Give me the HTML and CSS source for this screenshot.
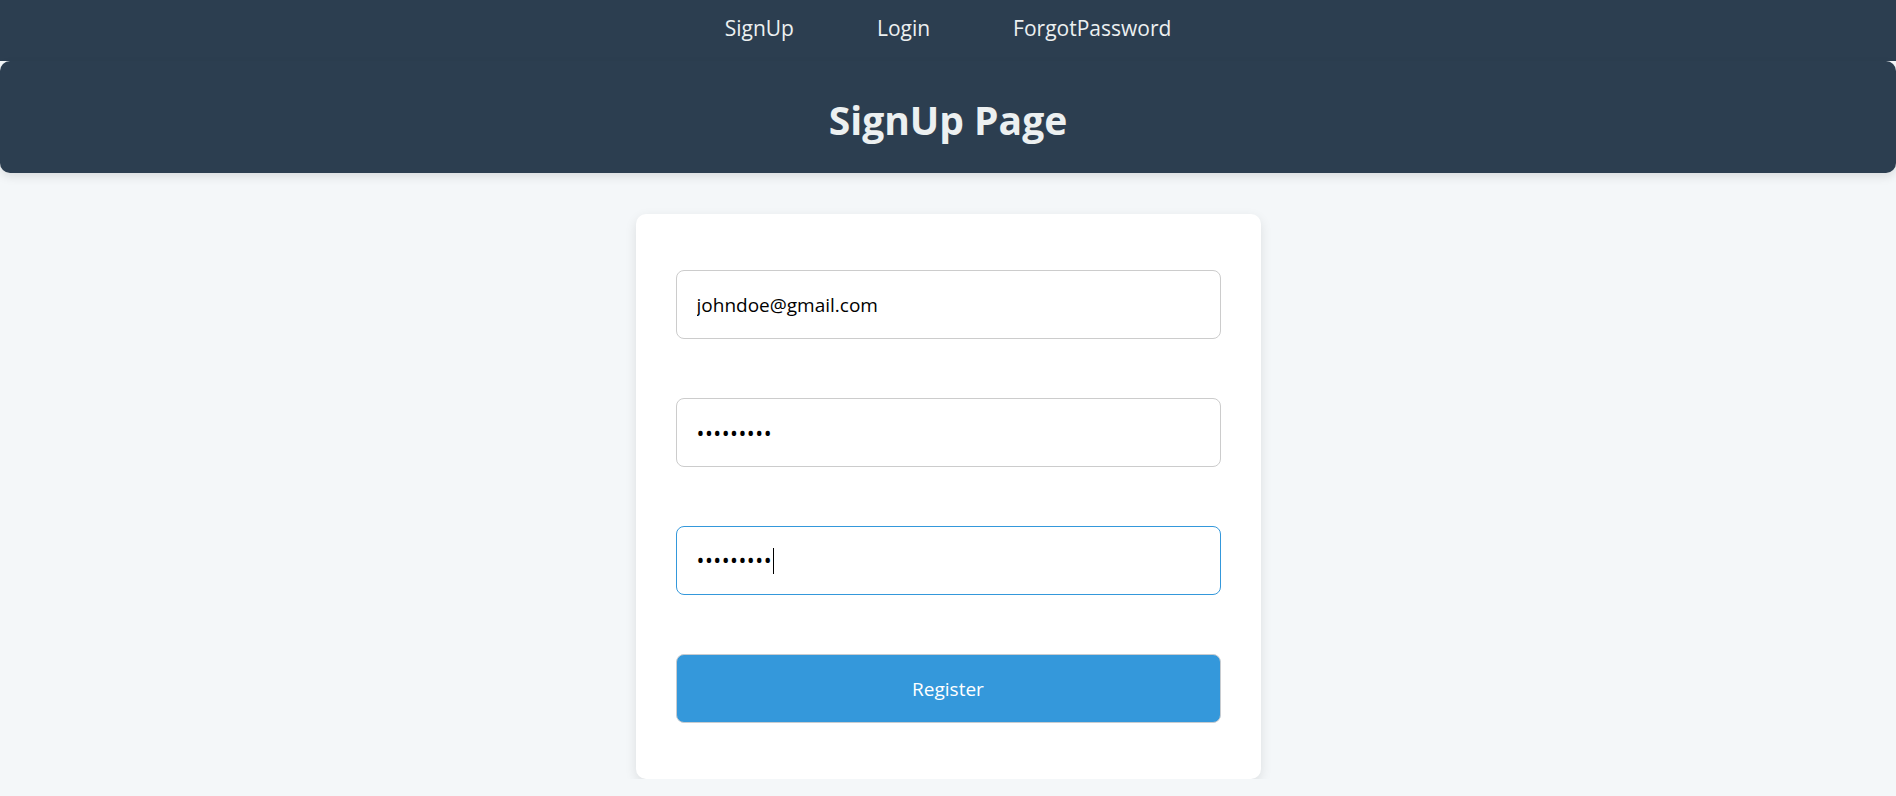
FILE: index.html
```html
<!DOCTYPE html>
<html lang="en">
<head>
<meta charset="utf-8">
<title>SignUp Page</title>
<link rel="stylesheet" href="styles.css">
</head>
<body>
<nav class="topnav">
  <a class="navlink" href="#">SignUp</a>
  <a class="navlink" href="#">Login</a>
  <a class="navlink" href="#">ForgotPassword</a>
</nav>
<header class="pagehead">
  <h1 class="title">SignUp Page</h1>
</header>
<main class="content">
  <form class="card">
    <input class="field" type="email" value="johndoe@gmail.com">
    <input class="field field-pw" type="password" value="123456789">
    <div class="field field-pw field-focus">
      <span class="dots">•••••••••</span><span class="caret"></span>
    </div>
    <button class="btn" type="button">Register</button>
  </form>
</main>
</body>
</html>
```
FILE: styles.css
```css
* { box-sizing: border-box; }
html, body { margin: 0; padding: 0; }
body {
  background: #f4f7f9;
  font-family: "Open Sans", "Noto Sans", "Liberation Sans", sans-serif;
  color: #000;
}
.topnav {
  height: 61px;
  background: #2c3e50;
  display: flex;
  justify-content: center;
  align-items: center;
  gap: 83px;
  padding-bottom: 6px;
}
.navlink {
  color: #ecf0f1;
  text-decoration: none;
  font-size: 21px;
}
.pagehead {
  height: 112px;
  background: #2c3e50;
  border-radius: 10px;
  box-shadow: 0 4px 10px rgba(0,0,0,0.1);
  display: flex;
  align-items: center;
  justify-content: center;
}
.title {
  margin: 0;
  color: #ecf0f1;
  font-size: 39px;
  font-weight: 700;
  padding-top: 4px;
}
.content {
  display: flex;
  justify-content: center;
  padding-top: 41px;
}
.card {
  width: 625px;
  background: #fff;
  border-radius: 10px;
  box-shadow: 0 4px 12px rgba(0,0,0,0.1);
  padding: 56px 40px;
  display: flex;
  flex-direction: column;
  gap: 59px;
  margin: 0;
}
.field {
  height: 69px;
  width: 100%;
  border: 1px solid #cccccc;
  border-radius: 8px;
  padding: 0 20px;
  font-family: inherit;
  font-size: 19px;
  color: #000;
  background: #fff;
  outline: none;
}
.field-pw { font-size: 21px; letter-spacing: 0.5px; }
.field-focus {
  border-color: #3498db;
  display: flex;
  align-items: center;
}
.dots { line-height: 1; }
.caret {
  width: 1px;
  height: 26px;
  background: #000;
  margin-left: 1px;
}
.btn {
  height: 69px;
  width: 100%;
  border: 1px solid #c8ccd0;
  border-radius: 8px;
  background: #3498db;
  color: #fff;
  font-family: inherit;
  font-size: 19px;
}
```
